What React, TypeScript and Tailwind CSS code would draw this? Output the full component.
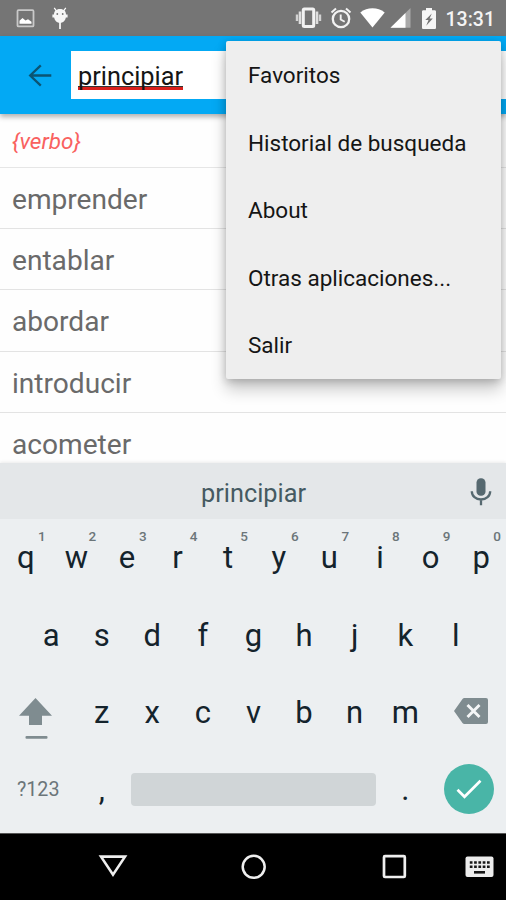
import React from 'react';

const words = ['emprender', 'entablar', 'abordar', 'introducir', 'acometer'];

const menuItems = ['Favoritos', 'Historial de busqueda', 'About', 'Otras aplicaciones...', 'Salir'];

const topRow = ['q', 'w', 'e', 'r', 't', 'y', 'u', 'i', 'o', 'p'];
const middleRow = ['a', 's', 'd', 'f', 'g', 'h', 'j', 'k', 'l'];
const bottomRow = ['z', 'x', 'c', 'v', 'b', 'n', 'm'];

const StatusBar: React.FC = () => (
  <div className="flex h-9 shrink-0 items-center bg-[#757575] text-white">
    {/* Notifications */}
    <svg className="ml-4 h-[19px] w-[19px]" viewBox="0 0 19 19" fill="none">
      <rect x="1.5" y="1.2" width="16" height="16.2" rx="1" stroke="#c9c9c9" strokeWidth="1.8" />
      <path d="M3.5 14.8v-3l3-2.8 3 2.4 2.5-1.2 3.5 2.6v2z" fill="#fff" />
    </svg>
    <svg className="ml-[16px] h-[24px] w-[18px]" viewBox="0 0 18 24">
      <path d="M3.2 1.8l2.4 3.4M14.800 1.800l-2.400 3.400" stroke="#fff" strokeWidth="1.200" />
      <path d="M9 3c3.900 0 6 2.300 6 5.500h1.600v3H14.900C14.300 14.900 12 16.900 9 16.900s-5.300-2-5.900-5.400H1.400v-3H3C3 5.300 5.100 3 9 3z" fill="#f6f6f6" />
      <circle cx="6.300" cy="8" r=".9" fill="#757575" />
      <circle cx="11.700" cy="8" r=".9" fill="#757575" />
      <path d="M9 16v7" stroke="#f6f6f6" strokeWidth="1.800" />
    </svg>

    {/* System icons */}
    <svg className="ml-auto h-[22px] w-[27px]" viewBox="0 0 27 22" fill="none">
      <rect x="8.300" y="2" width="10.400" height="17.500" rx="1" stroke="#f2f2f2" strokeWidth="3" />
      <path d="M5 4.500v12.500M22 4.500v12.500" stroke="#dedede" strokeWidth="2.600" />
      <path d="M2 7.500v6.500M25 7.500v6.500" stroke="#d2d2d2" strokeWidth="2.400" />
    </svg>
    <svg className="ml-[8px] h-[22px] w-[22px]" viewBox="0 0 22 22" fill="none" stroke="#f2f2f2">
      <circle cx="11" cy="12" r="8.200" strokeWidth="2.300" />
      <path d="M1.500 5.500l4.500-4M20.500 5.500l-4.500-4" strokeWidth="2" />
      <path d="M10.700 7.500v5l4 2.300" strokeWidth="1.900" />
    </svg>
    <svg className="ml-[8px] h-[20px] w-[25px]" viewBox="0 0 25 20">
      <path d="M.3 4.400C4 1.600 8 .3 12.500.3s8.500 1.300 12.200 4.100L12.500 19.600z" fill="#fff" />
    </svg>
    <svg className="ml-[5px] h-[20px] w-[21px]" viewBox="0 0 21 20">
      <path d="M20.500 0v19.800H.5z" fill="#a9a9a9" />
      <path d="M15.500 5v14.800H.5z" fill="#fff" />
    </svg>
    <svg className="ml-[11px] h-[21px] w-[14px]" viewBox="0 0 14 21">
      <path d="M4 0h6v2.200h2.700c.7 0 1.300.6 1.300 1.300v16.200c0 .7-.6 1.300-1.300 1.300H1.300C.6 21 0 20.400 0 19.700V3.500c0-.7.6-1.300 1.300-1.300H4z" fill="#f6f6f6" />
      <path d="M9.800 5.500L3.300 12h3.200L4.200 17.800l6.600-7.200H7.600z" fill="#757575" />
    </svg>
    <span className="mr-[11px] ml-[10px] pt-[3px] text-[19.500px] leading-none font-medium text-[#f4f4f4]">13:31</span>
  </div>
);

const SearchBar: React.FC = () => (
  <header className="flex h-[78px] shrink-0 items-center bg-[#03a9f4] shadow-[0_3px_5px_rgba(0,0,0,0.3)]">
    <svg className="ml-[28px] h-[23px] w-[24px]" viewBox="0 0 24 23" fill="none" stroke="#0b5473" strokeWidth="2.300">
      <path d="M23.300 11.500H3M12.800 1.300L2.200 11.500l10.600 10.200" />
    </svg>
    <div className="ml-[19px] h-12 flex-1 bg-white pt-[10px] pl-[7px]">
      <div className="h-[29px] w-[105px] border-b-[3px] border-[#d8201c] text-[25.300px] leading-[32px] text-[#151515]">
        <div className="h-[26px] border-b border-[#333]">principiar</div>
      </div>
    </div>
  </header>
);

const WordList: React.FC = () => (
  <main className="h-[349px] shrink-0 overflow-hidden bg-[#fefefe]">
    <div className="flex h-[54px] items-center border-b border-[#e6e6e6] pt-[3px] pl-3 text-[22.500px] text-[#f9615f] italic">
      {'{verbo}'}
    </div>
    {words.map((word) => (
      <div key={word} className="flex h-[61.200px] items-center border-b border-[#e3e3e3] pt-[4px] pl-3 text-[28.100px] text-[#6a6a6a]">
        {word}
      </div>
    ))}
  </main>
);

const OverflowMenu: React.FC = () => (
  <div className="absolute top-[41px] left-[226px] h-[337.500px] w-[275px] rounded-[2px] bg-[#eee] shadow-[0_11px_16px_rgba(0,0,0,0.2),0_2px_8px_rgba(0,0,0,0.22)]">
    {menuItems.map((item) => (
      <div key={item} className="flex h-[67.500px] items-center pt-[3px] pl-[22px] text-[22.500px] text-[#151515]">
        {item}
      </div>
    ))}
  </div>
);

const Key: React.FC<{ label: string; hint?: string }> = ({ label, hint }) => (
  <div className="relative flex h-full w-[50.600px] items-center justify-center pt-px pl-[1px] text-[31px] text-[#14232c]">
    {label}
    {hint && <span className="absolute top-[10px] right-[5px] text-[13.500px] leading-[14px] font-medium text-[#6b7579]">{hint}</span>}
  </div>
);

const Keyboard: React.FC = () => (
  <section className="h-[370px] shrink-0 bg-[#eceff1] shadow-[0_-1px_3px_rgba(0,0,0,0.08)]">
    {/* Suggestion strip */}
    <div className="relative flex h-14 items-center justify-center bg-[#e4e7e9] pt-[6px] pl-px text-[25.300px] text-[#455a62]">
      principiar
      <svg className="absolute top-[15px] right-[14px] h-[28px] w-[22px]" viewBox="0 0 22 28" fill="none">
        <rect x="6.500" y=".3" width="9" height="17.500" rx="4.300" fill="#566970" />
        <path d="M1.800 13.200c0 5 4 8.300 9.200 8.300s9.200-3.300 9.200-8.300M11 21.500v5.700" stroke="#566970" strokeWidth="2.300" />
      </svg>
    </div>

    <div className="flex h-[77.500px]">
      {topRow.map((key, i) => (
        <Key key={key} label={key} hint={String((i + 1) % 10)} />
      ))}
    </div>
    <div className="flex h-[77.500px] justify-center">
      {middleRow.map((key) => (
        <Key key={key} label={key} />
      ))}
    </div>
    <div className="flex h-[76.500px]">
      <div className="flex w-[75.900px] justify-center pt-[24px] pr-[4px]">
        <svg className="h-[43px] w-[33px]" viewBox="0 0 33 43" fill="#7f8c90">
          <path d="M16.500 0L33 17.800H23V27H10v-9.200H0z" />
          <rect x="6.500" y="38" width="22" height="2.800" rx="1" />
        </svg>
      </div>
      {bottomRow.map((key) => (
        <Key key={key} label={key} />
      ))}
      <div className="flex flex-1 justify-end pt-[24px] pr-[18px]">
        <svg className="h-[26px] w-[34px]" viewBox="0 0 34 26" fill="none">
          <path d="M8.500 1Q9.200 0 10.500 0H32q2 0 2 2v22q0 2-2 2H10.500q-1.300 0-2-1L0 13z" fill="#7f8c90" />
          <path d="M13.500 7l12 12M25.500 7l-12 12" stroke="#f4f6f7" strokeWidth="2.900" />
        </svg>
      </div>
    </div>
    <div className="flex h-[77.500px] items-center">
      <span className="w-[75.900px] pt-px pl-[17px] text-[19.700px] text-[#6b7579]">?123</span>
      <Key label="," />
      <div className="ml-[5px] h-[33px] w-[245px] rounded-[4px] bg-[#d0d5d7]" />
      <div className="ml-[3px]">
        <Key label="." />
      </div>
      <div className="mr-3 ml-auto flex h-[50px] w-[50px] items-center justify-center rounded-full bg-[#49b5a7]">
        <svg className="h-[20px] w-[26px]" viewBox="0 0 26 20" fill="none" stroke="#fff" strokeWidth="2.700">
          <path d="M1.500 10.800l7 7L24.500 1.800" />
        </svg>
      </div>
    </div>
  </section>
);

const NavBar: React.FC = () => (
  <nav className="flex h-[67px] shrink-0 items-start border-t border-[#555] bg-black">
    <svg className="mt-[21px] ml-[98px] h-[24px] w-[30px]" viewBox="0 0 30 24" fill="none" stroke="#efefef" strokeWidth="2.600">
      <path d="M3 1.600h24L15 19.600z" />
    </svg>
    <svg className="mt-[20px] ml-[112px] h-[26px] w-[26px]" viewBox="0 0 26 26" fill="none" stroke="#efefef" strokeWidth="2.500">
      <circle cx="13.700" cy="12.800" r="11" />
    </svg>
    <svg className="mt-[20px] ml-[116px] h-[25px] w-[25px]" viewBox="0 0 25 25" fill="none" stroke="#efefef" strokeWidth="2.700">
      <rect x="2" y="2.200" width="20.800" height="20.800" rx="1" />
    </svg>
    <svg className="mt-[22px] ml-[58px] h-[22px] w-[29px]" viewBox="0 0 29 22">
      <rect x=".5" y=".5" width="28" height="20.500" rx="2" fill="#ececec" />
      <path d="M4.800 6.500h20M4.800 10.700h20" stroke="#161616" strokeWidth="2.600" strokeDasharray="2.700 1.600" />
      <path d="M9 16.300h11" stroke="#161616" strokeWidth="2.600" />
    </svg>
  </nav>
);

const App: React.FC = () => {
  return (
    <div className="relative flex h-[900px] w-[506px] flex-col overflow-hidden bg-white font-['Roboto',sans-serif]">
      <StatusBar />
      <div className="z-10">
        <SearchBar />
      </div>
      <WordList />
      <Keyboard />
      <NavBar />
      <div className="absolute inset-0 z-20">
        <OverflowMenu />
      </div>
    </div>
  );
};

export default App;
